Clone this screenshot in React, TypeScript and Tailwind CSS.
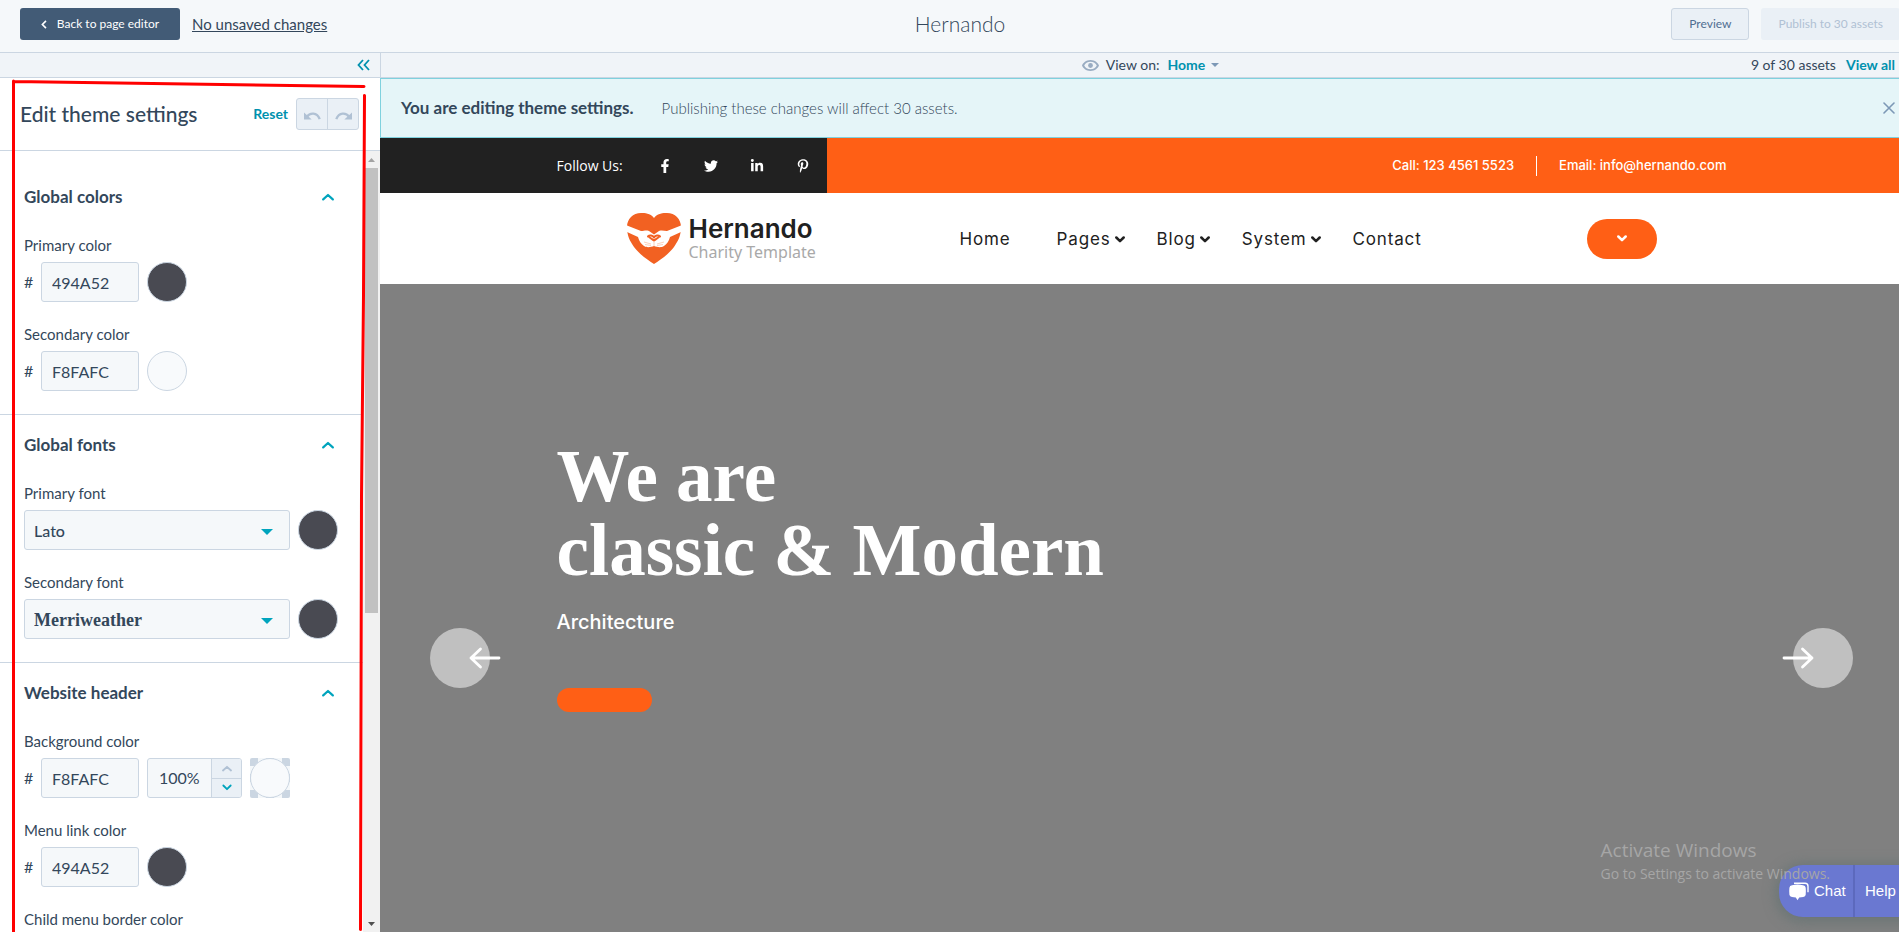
import React, { useState } from "react";
import { FaFacebookF, FaLinkedinIn, FaPinterestP, FaTwitter } from "react-icons/fa";

const fieldBox =
  "h-10 rounded-[3px] border border-[#cbd6e2] bg-[#f5f8fa] text-[#33475b] outline-none";

const Swatch: React.FC<{ color: string; label: string }> = ({ color, label }) => (
  <button
    type="button"
    aria-label={label}
    className="h-10 w-10 shrink-0 rounded-full border border-[#cbd6e2]"
    style={{ backgroundColor: color }}
  />
);

const Chevron: React.FC<{ up?: boolean; bold?: boolean; className?: string }> = ({ up, bold, className }) => (
  <svg viewBox="0 0 12 8" className={className} fill="none" stroke="currentColor" strokeWidth={bold ? 3 : 2.2}>
    <path d={up ? "M1.2 6.4 6 2l4.8 4.4" : "M1.6 1.6 6 6l4.4-4.4"} strokeLinecap="round" strokeLinejoin="round" />
  </svg>
);

interface ColorFieldProps {
  id: string;
  label: string;
  initial: string;
  opacity?: boolean;
}

const ColorField: React.FC<ColorFieldProps> = ({ id, label, initial, opacity }) => {
  const [value, setValue] = useState(initial);
  const [percent, setPercent] = useState("100%");

  return (
    <div>
      <label htmlFor={id} className="mb-[7px] block text-[15px] leading-5">
        {label}
      </label>
      <div className="flex items-center gap-2">
        <span className="w-[9px] text-base">#</span>
        <input
          id={id}
          value={value}
          onChange={(e) => setValue(e.target.value)}
          className={`${fieldBox} w-[98px] px-[10px] text-base`}
        />
        {opacity ? (
          <>
            <div className={`${fieldBox} flex w-[95px] overflow-hidden`}>
              <input
                aria-label={`${label} opacity`}
                value={percent}
                onChange={(e) => setPercent(e.target.value)}
                className="w-[63px] pl-[11px] text-base outline-none"
              />
              <div className="flex flex-1 flex-col border-l border-[#cbd6e2] bg-[#eaf0f6]">
                <button type="button" aria-label="Increase" className="flex flex-1 items-center justify-center border-b border-[#cbd6e2] text-[#b0c1d4]">
                  <Chevron up className="h-[7px] w-[10px]" />
                </button>
                <button type="button" aria-label="Decrease" className="flex flex-1 items-center justify-center text-[#00a4bd]">
                  <Chevron className="h-[7px] w-[10px]" />
                </button>
              </div>
            </div>
            <div className="h-10 w-10 rounded-[2px] bg-[conic-gradient(#f5f8fa_25%,#cbd6e2_0_50%,#f5f8fa_0_75%,#cbd6e2_0)] bg-[length:16px_16px]">
              <Swatch color={`#${value}`} label={`Pick ${label}`} />
            </div>
          </>
        ) : (
          <Swatch color={`#${value}`} label={`Pick ${label}`} />
        )}
      </div>
    </div>
  );
};

interface FontFieldProps {
  id: string;
  label: string;
  font: string;
  selectClass: string;
}

const FontField: React.FC<FontFieldProps> = ({ id, label, font, selectClass }) => (
  <div>
    <label htmlFor={id} className="mb-[7px] block text-[15px] leading-5">
      {label}
    </label>
    <div className="flex items-center gap-2">
      <div className="relative">
        <select id={id} defaultValue={font} className={`${fieldBox} block w-[266px] appearance-none px-[9px] pt-[2px] ${selectClass}`}>
          <option>{font}</option>
        </select>
        <svg viewBox="0 0 12 6" className="pointer-events-none absolute top-[19px] right-[17px] h-[6px] w-3 fill-[#00a4bd]">
          <path d="M0 0h12L6 6z" />
        </svg>
      </div>
      <Swatch color="#494a52" label={`${label} color`} />
    </div>
  </div>
);

const Section: React.FC<{ title: string; first?: boolean; children: React.ReactNode }> = ({ title, first, children }) => (
  <section className={`border-b border-[#cbd6e2] pr-[25px] pb-[23px] pl-6 ${first ? "pt-[34px]" : "pt-[18px]"}`}>
    <button type="button" className="mb-[26px] flex w-full items-center justify-between text-[17px] leading-6 font-bold">
      {title}
      <Chevron up className="mr-1 h-2 w-3 text-[#00a4bd]" />
    </button>
    <div className="flex flex-col gap-[22px]">{children}</div>
  </section>
);

const Sidebar: React.FC = () => (
  <aside className="flex w-[380px] shrink-0 flex-col bg-white">
    <div className="flex h-[25px] shrink-0 items-center justify-end border-b border-[#cbd6e2] bg-[#f0f4f8] pr-[10px]">
      <button type="button" aria-label="Collapse sidebar" className="text-[#0091ae]">
        <svg viewBox="0 0 13 12" className="h-3 w-[13px]" fill="none" stroke="currentColor" strokeWidth="1.8">
          <path d="M6 1 1.5 6 6 11M12 1 7.5 6l4.500 5" />
        </svg>
      </button>
    </div>
    <div className="flex h-[73px] shrink-0 items-center border-b border-[#cbd6e2] pr-[21px] pl-5">
      <h2 className="flex-1 text-[21px] font-medium">Edit theme settings</h2>
      <a href="#reset" className="mr-2 text-sm font-bold text-[#0091ae]">
        Reset
      </a>
      <div className="flex h-8 w-[63px] rounded-[3px] border border-[#cbd6e2] bg-[#eaf0f6] text-[#b0c1d4]">
        <button type="button" aria-label="Undo" className="flex flex-1 items-center justify-center border-r border-[#cbd6e2]">
          <svg viewBox="0 0 17 10" className="mt-[3px] h-[10px] w-[17px]" fill="none" stroke="currentColor" strokeWidth="2.4">
            <path d="M2.500 6.200C6 1.200 13 1 15.700 8.200" />
            <path d="M0 1.500v7h7.700z" fill="currentColor" stroke="none" />
          </svg>
        </button>
        <button type="button" aria-label="Redo" className="flex flex-1 items-center justify-center">
          <svg viewBox="0 0 17 10" className="mt-[3px] h-[10px] w-[17px]" fill="none" stroke="currentColor" strokeWidth="2.4">
            <path d="M14.500 6.200C11 1.200 4 1 1.300 8.200" />
            <path d="M17 1.500v7H9.300z" fill="currentColor" stroke="none" />
          </svg>
        </button>
      </div>
    </div>
    <div className="flex min-h-0 flex-1">
      <div className="min-w-0 flex-1 overflow-hidden">
        <Section title="Global colors" first>
          <ColorField id="primary-color" label="Primary color" initial="494A52" />
          <ColorField id="secondary-color" label="Secondary color" initial="F8FAFC" />
        </Section>
        <Section title="Global fonts">
          <FontField id="primary-font" label="Primary font" font="Lato" selectClass="text-base font-medium" />
          <FontField id="secondary-font" label="Secondary font" font="Merriweather" selectClass="font-['Liberation_Serif',serif] text-lg font-bold" />
        </Section>
        <Section title="Website header">
          <ColorField id="header-bg" label="Background color" initial="F8FAFC" opacity />
          <ColorField id="menu-link" label="Menu link color" initial="494A52" />
          <ColorField id="child-border" label="Child menu border color" initial="494A52" />
        </Section>
      </div>
      <div className="flex w-[17px] flex-col items-center bg-[#f1f1f1]">
        <svg viewBox="0 0 7 4" className="mt-[7px] h-1 w-[7px] fill-[#a3a3a3]">
          <path d="M0 4h7L3.500 0z" />
        </svg>
        <div className="mt-[6px] h-[57%] w-[13px] bg-[#c1c1c1]" />
        <div className="flex-1" />
        <svg viewBox="0 0 7 4" className="mb-[6px] h-1 w-[7px] fill-[#505050]">
          <path d="M0 0h7L3.500 4z" />
        </svg>
      </div>
    </div>
  </aside>
);

const navItems = [
  { name: "Pages", menu: true },
  { name: "Blog", menu: true },
  { name: "System", menu: true },
  { name: "Contact", menu: false },
];

const HeartLogo: React.FC = () => (
  <svg viewBox="0 0 54 51" className="h-[51px] w-[54px] shrink-0">
    <path
      fill="#f26122"
      d="M27 5C23 0 18 0 14 0 6 0 0 6 0 14c0 9 3 14 7 20 6 8 14 13 20 17 6-4 14-9 20-17 4-6 7-11 7-20C54 6 48 0 40 0 36 0 31 0 27 5z"
    />
    <path
      fill="#fff"
      d="M0 12.500l14 5.500c3 0 5-1 8 0l5 3.500 5-3.500c3-1 5 0 8 0l14-5.500v6.500l-11 5c-1 4-3 7-6 9-3 2-7 1-10 0-3 1-7 2-10 0-3-2-5-5-6-9L0 19z"
    />
    <path
      d="M27 27.500c-2-1.700-4.500-2.500-5.700-4.500M27 27.500c2-1.700 4.500-2.500 5.700-4.500M27 24.500c-1.300-2.300-4.500-2.700-6-1M27 24.500c1.300-2.300 4.500-2.700 6-1"
      fill="none"
      stroke="#f26122"
      strokeWidth="2"
      strokeLinecap="round"
    />
    <path stroke="#f8b08f" strokeWidth=".6" fill="none" d="M17 29l7 2M18 31.500l6 1M37 29l-7 2M36 31.500l-6 1M27 29v4" />
  </svg>
);

const SiteHeader: React.FC = () => (
  <>
    <div className="flex h-[55px] shrink-0 bg-[#ff5f15] text-white">
      <div className="flex-1 bg-[#212121]" />
      <div className="flex w-full max-w-[1170px]">
        <div className="flex w-[270px] items-center bg-[#212121]">
          <span className="w-[100px] font-['Open_Sans',sans-serif] text-sm">Follow Us:</span>
          <div className="flex flex-1 items-center justify-between pr-4 text-sm">
            <a href="#facebook" aria-label="Facebook" className="flex w-4 justify-center"><FaFacebookF /></a>
            <a href="#twitter" aria-label="Twitter" className="flex w-4 justify-center"><FaTwitter /></a>
            <a href="#linkedin" aria-label="LinkedIn" className="flex w-4 justify-center"><FaLinkedinIn /></a>
            <a href="#pinterest" aria-label="Pinterest" className="flex w-4 justify-center"><FaPinterestP /></a>
          </div>
        </div>
        <div className="flex flex-1 items-center justify-end pt-px font-['Inter',sans-serif] text-[13px] font-medium">
          <span>Call: 123 4561 5523</span>
          <span className="mx-[22px] h-5 w-px bg-white" />
          <a href="mailto:info@hernando.com">Email: info@hernando.com</a>
        </div>
      </div>
      <div className="flex-1" />
    </div>
    <div className="flex h-[91px] shrink-0 justify-center bg-white">
      <div className="flex w-full max-w-[1170px] items-center px-[70px]">
        <a href="#home" className="flex w-[333px] items-center gap-2">
          <HeartLogo />
          <span className="flex flex-col pt-[2px]">
            <span className="font-['Inter',sans-serif] text-[26px] leading-6 font-semibold text-[#212121]">Hernando</span>
            <span className="font-['Noto_Sans',sans-serif] text-base leading-[22px] text-[#a9a9a9]">Charity Template</span>
          </span>
        </a>
        <nav className="flex flex-1 items-center gap-8 font-['Inter',sans-serif] text-[17px] leading-6 tracking-wider text-[#212121]">
          <a href="#home" className="mr-[14px]">Home</a>
          {navItems.map((item) => (
            <a key={item.name} href={`#${item.name.toLowerCase()}`} className="flex items-center gap-1">
              {item.name}
              {item.menu && <Chevron bold className="mt-[2px] h-[7px] w-[10px]" />}
            </a>
          ))}
        </nav>
        <button type="button" aria-label="More" className="flex h-10 w-[70px] items-center justify-center rounded-full bg-[#ff5f15] text-white">
          <Chevron bold className="h-[7px] w-[10px]" />
        </button>
      </div>
    </div>
  </>
);

const Hero: React.FC = () => (
  <div className="relative flex h-[748px] shrink-0 justify-center bg-[#808080] text-white">
    <button type="button" aria-label="Previous slide" className="absolute top-[344px] left-[50px] h-[60px] w-[60px] rounded-full bg-white/50">
      <svg viewBox="0 0 32 22" className="ml-[39px] h-[22px] w-8" fill="none" stroke="#fff" strokeWidth="2.800" strokeLinecap="round" strokeLinejoin="round">
        <path d="M30 11H2M11.500 2 2 11l9.500 9" />
      </svg>
    </button>
    <div className="w-full max-w-[1170px] pt-[156px]">
      <h1 className="font-['Liberation_Serif',serif] text-[73px] leading-[74px] font-bold">
        We are
        <br />
        classic &amp; Modern
      </h1>
      <p className="mt-5 font-['Inter',sans-serif] text-xl leading-7 font-medium">Architecture</p>
      <button type="button" aria-label="Read more" className="mt-[52px] block h-6 w-[95px] rounded-full bg-[#ff5f15]" />
    </div>
    <button type="button" aria-label="Next slide" className="absolute top-[344px] right-[50px] h-[60px] w-[60px] rounded-full bg-white/50">
      <svg viewBox="0 0 32 22" className="-ml-[11px] h-[22px] w-8" fill="none" stroke="#fff" strokeWidth="2.800" strokeLinecap="round" strokeLinejoin="round">
        <path d="M2 11h28M20.500 2l9.500 9-9.500 9" />
      </svg>
    </button>
  </div>
);

const Canvas: React.FC = () => (
  <main className="flex min-w-0 flex-1 flex-col">
    <div className="flex h-[25px] shrink-0 items-center border-b border-l border-[#cbd6e2] bg-[#f0f4f8] px-[25px] text-sm">
      <div className="flex-1" />
      <div className="flex items-center">
        <svg viewBox="0 0 17 11" className="mr-[7px] h-[11px] w-[17px]">
          <path fill="#99acc2" fillRule="evenodd" d="M8.500 0C13 0 16 3 17 5.500 16 8 13 11 8.500 11S1 8 0 5.500C1 3 4 0 8.500 0zm0 1.800c-3 0-5.300 1.600-6.300 3.700 1 2.100 3.300 3.700 6.300 3.700s5.300-1.600 6.300-3.700c-1-2.100-3.300-3.700-6.300-3.700z" />
          <circle cx="8.500" cy="5.500" r="2.400" fill="#99acc2" />
        </svg>
        <span>View on:</span>
        <button type="button" className="ml-2 flex items-center gap-[6px] font-bold text-[#0091ae]">
          Home
          <svg viewBox="0 0 8 4" className="h-1 w-2 fill-[#7c98b6]">
            <path d="M0 0h8L4 4z" />
          </svg>
        </button>
      </div>
      <div className="flex flex-1 items-center justify-end gap-[10px]">
        <span>9 of 30 assets</span>
        <a href="#all" className="font-bold text-[#0091ae]">View all</a>
      </div>
    </div>
    <div className="flex h-[60px] shrink-0 items-center border border-[#7fd1de] bg-[#e5f5f8] pr-6 pl-5">
      <strong className="text-[17px] font-bold">You are editing theme settings.</strong>
      <span className="ml-7 flex-1 text-[15px] font-light">Publishing these changes will affect 30 assets.</span>
      <button type="button" aria-label="Dismiss">
        <svg viewBox="0 0 12 12" className="h-3 w-3" stroke="#7c98b6" strokeWidth="1.600" strokeLinecap="round">
          <path d="M1 1l10 10M11 1 1 11" />
        </svg>
      </button>
    </div>
    <div className="flex min-h-0 flex-1 flex-col overflow-hidden pr-[17px]">
      <SiteHeader />
      <Hero />
    </div>
  </main>
);

const ChatWidget: React.FC = () => (
  <div className="absolute right-0 bottom-[15px] flex h-[52px] w-[141px] overflow-hidden rounded-l-3xl bg-[#6a78d1] pr-[17px] font-['Liberation_Sans',sans-serif] text-[15px] text-white shadow-[0_2px_12px_4px_rgba(90,110,110,0.5)]">
    <button type="button" className="flex w-[76px] items-center gap-[5px] border-r-2 border-[#5c69bd] pl-[10px]">
      <svg viewBox="0 0 20 19" className="h-[19px] w-5">
        <path d="M5 1.200h11q3 0 3 3v6" fill="none" stroke="#fff" strokeWidth="1.400" />
        <path fill="#fff" d="M3 3.200Q8.500 2 14 3.200q2.500.3 2.700 2.500.4 3.500 0 7-.2 2-2.500 2.400l-4 .4-1.700 2.700L6.800 15.500l-3.800-.4Q.7 14.700.4 12.700q-.4-3.500 0-7Q.7 3.500 3 3.200z" />
      </svg>
      Chat
    </button>
    <button type="button" className="pl-[10px]">Help</button>
  </div>
);

const App: React.FC = () => (
  <div className="relative h-screen overflow-hidden">
    <div className="relative flex h-full w-[calc(100%+21px)] flex-col font-['Lato',sans-serif] text-[#33475b]">
      <header className="flex h-[53px] shrink-0 items-center border-b border-[#cbd6e2] bg-[#f5f8fa] px-5 pb-1">
        <div className="flex flex-1 items-center gap-3">
          <button type="button" className="flex h-8 w-40 items-center justify-center gap-[10px] rounded-[3px] bg-[#425b76] text-xs text-white">
            <svg viewBox="0 0 6 10" className="h-[9px] w-[6px]" fill="none" stroke="currentColor" strokeWidth="1.800">
              <path d="M5.200 1 1.200 5l4 4" />
            </svg>
            Back to page editor
          </button>
          <a href="#changes" className="text-[15px] underline">No unsaved changes</a>
        </div>
        <h1 className="text-[21px] font-light">Hernando</h1>
        <div className="flex flex-1 justify-end gap-3">
          <button type="button" className="h-8 rounded-[3px] border border-[#cbd6e2] bg-[#eaf0f6] px-[17px] text-xs text-[#506e91]">Preview</button>
          <button type="button" disabled className="h-8 rounded-[3px] bg-[#eaf0f6] px-[17px] text-xs text-[#b0c1d4]">Publish to 30 assets</button>
        </div>
      </header>
      <div className="flex min-h-0 flex-1">
        <Sidebar />
        <Canvas />
      </div>
      <ChatWidget />
      <div className="pointer-events-none absolute right-[90px] bottom-12 font-['Open_Sans',sans-serif] text-[#a6a6a6]">
        <p className="text-[19px] leading-7">Activate Windows</p>
        <p className="text-sm leading-5">Go to Settings to activate Windows.</p>
      </div>
    </div>
    {/* hand-drawn marker around the settings panel */}
    <svg viewBox="0 0 380 860" className="pointer-events-none absolute top-[72px] left-0 h-[860px] w-[380px]" fill="none" stroke="#ff0000" strokeWidth="3" strokeLinecap="round">
      <path d="M13.500 9v851M14 9.500 364 14.500M364.500 23.500l-1 200-2 200-1 434" />
    </svg>
  </div>
);

export default App;
